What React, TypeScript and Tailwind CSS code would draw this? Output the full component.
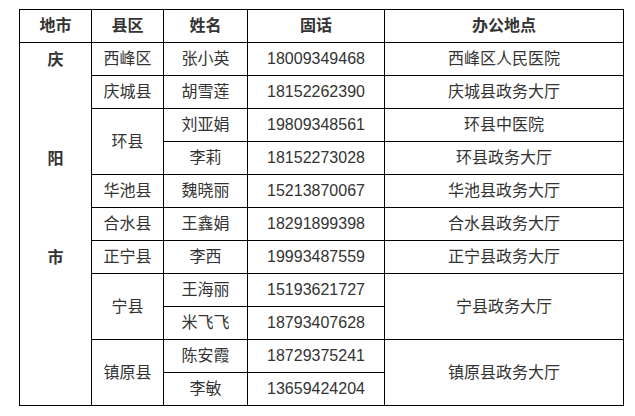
import React from "react";

type Row = { county?: string; countySpan?: number; name: string; phone: string; office?: string; officeSpan?: number };

const rows: Row[] = [
  { county: "西峰区", name: "张小英", phone: "18009349468", office: "西峰区人民医院" },
  { county: "庆城县", name: "胡雪莲", phone: "18152262390", office: "庆城县政务大厅" },
  { county: "环县", countySpan: 2, name: "刘亚娟", phone: "19809348561", office: "环县中医院" },
  { name: "李莉", phone: "18152273028", office: "环县政务大厅" },
  { county: "华池县", name: "魏晓丽", phone: "15213870067", office: "华池县政务大厅" },
  { county: "合水县", name: "王鑫娟", phone: "18291899398", office: "合水县政务大厅" },
  { county: "正宁县", name: "李西", phone: "19993487559", office: "正宁县政务大厅" },
  { county: "宁县", countySpan: 2, name: "王海丽", phone: "15193621727", office: "宁县政务大厅", officeSpan: 2 },
  { name: "米飞飞", phone: "18793407628" },
  { county: "镇原县", countySpan: 2, name: "陈安霞", phone: "18729375241", office: "镇原县政务大厅", officeSpan: 2 },
  { name: "李敏", phone: "13659424204" },
];

const td = "border border-black p-0 h-[33px] text-center align-middle";

export default function App() {
  return (
    <div
      className="w-[635px] h-[416px] bg-white pl-[19px] pt-[9px] text-[16px] text-[#333]"
      style={{ fontFamily: '"Liberation Sans", "Noto Sans CJK SC", sans-serif' }}
    >
      <table className="table-fixed border-collapse w-[604px]">
        <colgroup>
          <col className="w-[72px]" />
          <col className="w-[72px]" />
          <col className="w-[84px]" />
          <col className="w-[137px]" />
          <col className="w-[239px]" />
        </colgroup>
        <thead>
          <tr>
            {["地市", "县区", "姓名", "固话", "办公地点"].map((h) => (
              <th key={h} className={td + " font-bold"}>
                {h}
              </th>
            ))}
          </tr>
        </thead>
        <tbody>
          {rows.map((r, i) => (
            <tr key={i}>
              {i === 0 && (
                <td rowSpan={11} className="border border-black p-0 align-top text-center font-bold">
                  <div className="flex flex-col gap-[66px]">
                    <div className="h-[33px] leading-[33px]">庆</div>
                    <div className="h-[33px] leading-[33px]">阳</div>
                    <div className="h-[33px] leading-[33px]">市</div>
                  </div>
                </td>
              )}
              {r.county && (
                <td rowSpan={r.countySpan ?? 1} className={td}>
                  {r.county}
                </td>
              )}
              <td className={td}>{r.name}</td>
              <td className={td}>{r.phone}</td>
              {r.office && (
                <td rowSpan={r.officeSpan ?? 1} className={td}>
                  {r.office}
                </td>
              )}
            </tr>
          ))}
        </tbody>
      </table>
    </div>
  );
}
